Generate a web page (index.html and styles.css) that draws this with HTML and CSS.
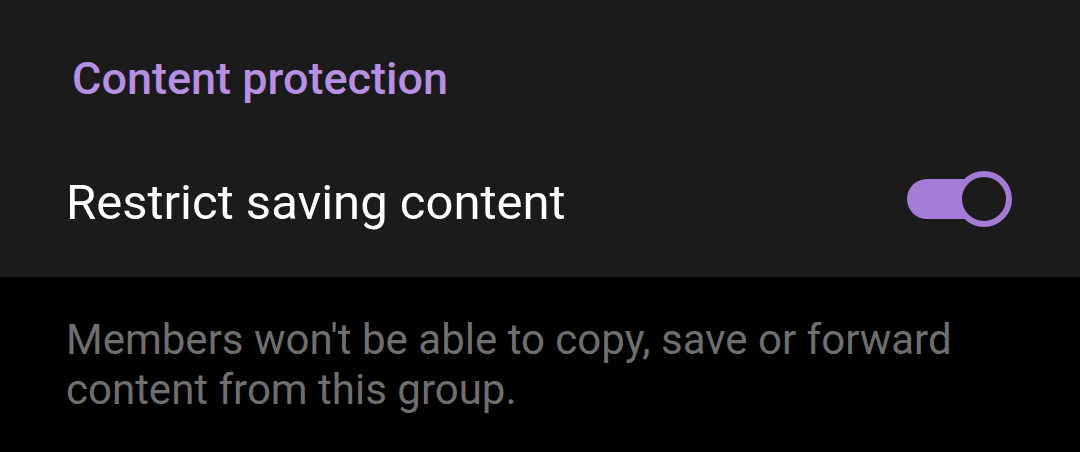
FILE: index.html
```html
<!DOCTYPE html>
<html>
<head>
<meta charset="utf-8">
<link rel="stylesheet" href="styles.css">
</head>
<body>
<div class="screen">
  <section class="card">
    <h2 class="header">Content protection</h2>
    <div class="row">
      <span class="label">Restrict saving content</span>
      <span class="switch"><span class="track"></span><span class="thumb"></span></span>
    </div>
  </section>
  <p class="hint">Members won't be able to copy, save or forward content from this group.</p>
</div>
</body>
</html>
```
FILE: styles.css
```css
html, body {
  margin: 0;
  padding: 0;
  background: #000;
}
.screen {
  width: 1080px;
  height: 452px;
  overflow: hidden;
  font-family: Roboto, "Noto Sans", sans-serif;
}
.card {
  background: #1b1b1b;
  height: 277px;
  box-sizing: border-box;
  padding-top: 51px;
}
.header {
  margin: 0 0 0 72px;
  font-size: 45px;
  font-weight: 500;
  color: #b78fe3;
  line-height: 56px;
}
.row {
  display: flex;
  align-items: center;
  justify-content: space-between;
  margin-top: 65px;
  padding: 0 68px 0 66px;
  height: 62px;
}
.label {
  color: #ffffff;
  font-size: 49px;
  line-height: 62px;
}
.switch {
  position: relative;
  width: 105px;
  height: 56px;
  margin-top: -9px;
  display: flex;
  align-items: center;
}
.track {
  display: block;
  width: 95px;
  height: 40px;
  border-radius: 20px;
  background: #a47bd6;
}
.thumb {
  position: absolute;
  right: 0;
  top: 0;
  width: 44px;
  height: 44px;
  border: 6px solid #a47bd6;
  border-radius: 50%;
  background: #1b1b1b;
}
.hint {
  margin: 0;
  padding: 38px 100px 0 66px;
  color: #6f6f6f;
  font-size: 42px;
  line-height: 50px;
}
```
